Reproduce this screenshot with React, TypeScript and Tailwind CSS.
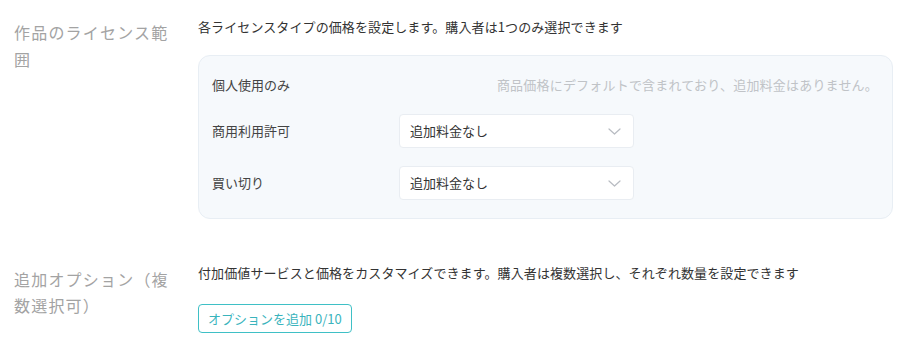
import React from "react";

const font = { fontFamily: '"Noto Sans CJK JP", "Noto Sans", sans-serif' };

function Chevron() {
  return (
    <svg width="13" height="7" viewBox="0 0 13 7" fill="none">
      <path d="M1 1 L6.5 6 L12 1" stroke="#b8bcc2" strokeWidth="1.2" strokeLinecap="round" strokeLinejoin="round" />
    </svg>
  );
}

function Select({ value }: { value: string }) {
  return (
    <div className="flex h-[34px] w-[235px] items-center justify-between rounded-[4px] border border-[#e9edf2] bg-white pl-[10px] pr-[12px]">
      <span className="text-[13px] text-[#333]">{value}</span>
      <Chevron />
    </div>
  );
}

export default function App() {
  return (
    <div className="w-[904px] h-[351px] bg-white overflow-hidden" style={font}>
      <div className="flex pl-[14px] pt-[17px]">
        <div className="mt-[2px] w-[164px] shrink-0 text-[16px] leading-[27px] tracking-[1.2px] text-[#a3a3a3]">
          作品のライセンス範囲
        </div>
        <div className="ml-[20px] w-[695px]">
          <div className="text-[13px] leading-[20px] tracking-[0.1px] text-[#333]">
            各ライセンスタイプの価格を設定します。購入者は1つのみ選択できます
          </div>
          <div className="mt-[18px] rounded-[12px] border border-[#e8eef4] bg-[#f6f9fc] pl-[13px] pr-[14px] pt-[19px] pb-[18px]">
            <div className="flex h-[20px] items-center justify-between">
              <span className="text-[13px] text-[#444]">個人使用のみ</span>
              <span className="text-[13px] tracking-[0.2px] text-[#c0c3c7]">
                商品価格にデフォルトで含まれており、追加料金はありません。
              </span>
            </div>
            <div className="mt-[19px] flex items-center">
              <span className="w-[187px] text-[13px] text-[#444]">商用利用許可</span>
              <Select value="追加料金なし" />
            </div>
            <div className="mt-[18px] flex items-center">
              <span className="w-[187px] text-[13px] text-[#444]">買い切り</span>
              <Select value="追加料金なし" />
            </div>
          </div>
        </div>
      </div>
      <div className="flex pl-[14px] pt-[44px]">
        <div className="mt-[3px] w-[164px] shrink-0 text-[16px] leading-[26px] tracking-[1.2px] text-[#a3a3a3]">
          追加オプション（複数選択可）
        </div>
        <div className="ml-[20px]">
          <div className="text-[13px] leading-[20px] tracking-[0.1px] text-[#333]">
            付加価値サービスと価格をカスタマイズできます。購入者は複数選択し、それぞれ数量を設定できます
          </div>
          <button className="mt-[21px] flex h-[29px] items-center rounded-[4px] border border-[#3fc0c6] px-[9px] text-[13px] text-[#3ab4bd]">
            オプションを追加 0/10
          </button>
        </div>
      </div>
    </div>
  );
}
